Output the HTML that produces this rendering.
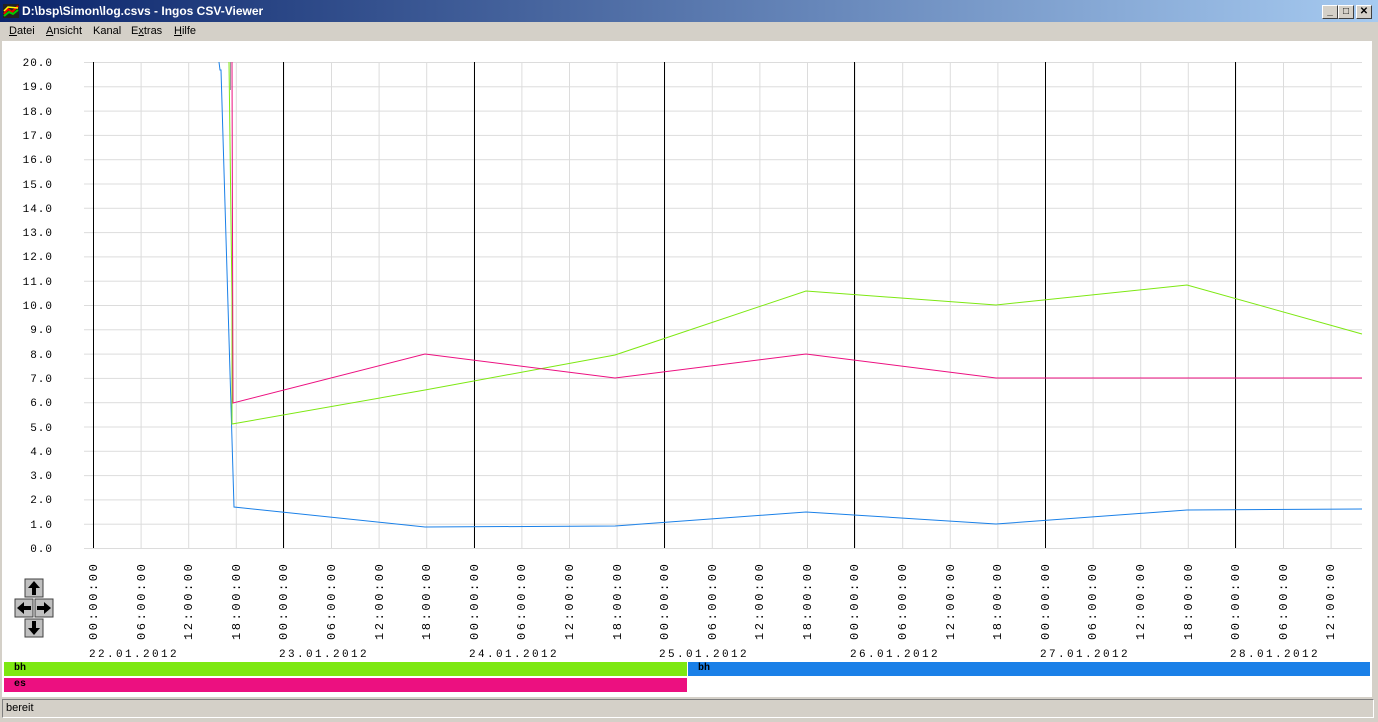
<!DOCTYPE html>
<html><head><meta charset="utf-8"><style>
body{margin:0;width:1378px;height:722px;overflow:hidden;background:#d4d0c8;font-family:Tahoma,"Liberation Sans",sans-serif;font-size:11px;position:relative}
.title{position:absolute;left:0;top:0;width:1378px;height:22px;background:linear-gradient(90deg,#0a246a,#a6caf0);color:#fff;font-weight:bold;font-size:12px;line-height:22px}
.btn{position:absolute;top:5px;width:16px;height:14px;background:#d4d0c8;border:1px solid;border-color:#fff #404040 #404040 #fff;box-sizing:border-box;color:#000;font-size:10px;line-height:12px;text-align:center}
.menu{position:absolute;top:22px;left:0;width:400px;height:19px;line-height:19px;white-space:nowrap;font-size:11px}
.menu span{position:absolute;top:0}
.client{position:absolute;left:2px;top:41px;width:1370px;height:656px;background:#fff}
.bar{position:absolute;height:14px;font-family:"Liberation Mono",monospace;font-size:10px;line-height:13px;padding-left:10px;box-sizing:border-box;font-weight:bold}
.status{position:absolute;left:2px;top:699px;width:1372px;height:19px;border:1px solid;border-color:#808080 #fff #fff #808080;box-sizing:border-box;line-height:17px;padding-left:3px;font-size:11px}
</style></head><body>
<div class="title"><svg width="16" height="14" style="position:absolute;left:3px;top:4px"><rect width="16" height="14" fill="#222"/><path d="M1 10L5 5L9 8L15 2" stroke="#e00" stroke-width="2" fill="none"/><path d="M1 12L6 8L10 10L15 6" stroke="#0c0" stroke-width="2" fill="none"/><path d="M1 7L5 3L15 4" stroke="#ff0" stroke-width="1.5" fill="none"/></svg><span style="position:absolute;left:22px">D:\bsp\Simon\log.csvs - Ingos CSV-Viewer</span>
<div class="btn" style="left:1322px">_</div><div class="btn" style="left:1338px">□</div><div class="btn" style="left:1356px;font-weight:bold">✕</div></div>
<div class="menu"><span style="left:9px"><u>D</u>atei</span><span style="left:46px"><u>A</u>nsicht</span><span style="left:93px">Kanal</span><span style="left:131px">E<u>x</u>tras</span><span style="left:174px"><u>H</u>ilfe</span></div>
<div class="client"></div>
<svg width="1378" height="722" style="position:absolute;left:0;top:0" font-family="Liberation Mono,monospace" font-size="11">
<defs><pattern id="g" x="93" y="62" width="47.6" height="24.3" patternUnits="userSpaceOnUse"><path d="M0 0.5H47.6M0.5 0V24.3" stroke="#dcdcdc" stroke-width="1"/></pattern></defs>
<rect x="93" y="62" width="1269" height="486" fill="url(#g)"/>
<g stroke="#dcdcdc"><path d="M84 62.5H93M84 86.8H93M84 111.1H93M84 135.4H93M84 159.7H93M84 184H93M84 208.3H93M84 232.6H93M84 256.9H93M84 281.2H93M84 305.5H93M84 329.8H93M84 354.1H93M84 378.4H93M84 402.7H93M84 427H93M84 451.3H93M84 475.6H93M84 499.9H93M84 524.2H93M84 548.5H1362"/></g>
<g stroke="#000"><path d="M93.5 62V548M283.5 62V548M474.5 62V548M664.5 62V548M854.5 62V548M1045.5 62V548M1235.5 62V548"/></g>
<g fill="#000" text-anchor="end" letter-spacing="1">
<text x="53" y="66">20.0</text><text x="53" y="90">19.0</text><text x="53" y="115">18.0</text><text x="53" y="139">17.0</text><text x="53" y="163">16.0</text><text x="53" y="188">15.0</text><text x="53" y="212">14.0</text><text x="53" y="236">13.0</text><text x="53" y="260">12.0</text><text x="53" y="285">11.0</text><text x="53" y="309">10.0</text><text x="53" y="333">9.0</text><text x="53" y="358">8.0</text><text x="53" y="382">7.0</text><text x="53" y="406">6.0</text><text x="53" y="431">5.0</text><text x="53" y="455">4.0</text><text x="53" y="479">3.0</text><text x="53" y="503">2.0</text><text x="53" y="528">1.0</text><text x="53" y="552">0.0</text></g>
<g fill="none" stroke-width="1">
<polyline stroke="#1a80e8" points="219,62 220,70 221,70 234,507 425,527 615,526 806,512 996,524 1187,510 1362,509"/>
<polyline stroke="#7de812" points="229,62 232,300 232,424 425,390 615,355 806,291 996,305 1187,285 1362,334"/>
<polyline stroke="#ec1080" points="232,62 233,403 425,354 615,378 806,354 996,378 1362,378"/>
<path d="M230.5 62V90" stroke="#999"/>
</g>
<g fill="#000" letter-spacing="2.6" font-size="12">
<text transform="translate(97,640) rotate(-90)">00:00:00</text><text transform="translate(145,640) rotate(-90)">06:00:00</text><text transform="translate(192,640) rotate(-90)">12:00:00</text><text transform="translate(240,640) rotate(-90)">18:00:00</text>
<text transform="translate(287,640) rotate(-90)">00:00:00</text><text transform="translate(335,640) rotate(-90)">06:00:00</text><text transform="translate(383,640) rotate(-90)">12:00:00</text><text transform="translate(430,640) rotate(-90)">18:00:00</text>
<text transform="translate(478,640) rotate(-90)">00:00:00</text><text transform="translate(525,640) rotate(-90)">06:00:00</text><text transform="translate(573,640) rotate(-90)">12:00:00</text><text transform="translate(621,640) rotate(-90)">18:00:00</text>
<text transform="translate(668,640) rotate(-90)">00:00:00</text><text transform="translate(716,640) rotate(-90)">06:00:00</text><text transform="translate(763,640) rotate(-90)">12:00:00</text><text transform="translate(811,640) rotate(-90)">18:00:00</text>
<text transform="translate(858,640) rotate(-90)">00:00:00</text><text transform="translate(906,640) rotate(-90)">06:00:00</text><text transform="translate(954,640) rotate(-90)">12:00:00</text><text transform="translate(1001,640) rotate(-90)">18:00:00</text>
<text transform="translate(1049,640) rotate(-90)">00:00:00</text><text transform="translate(1096,640) rotate(-90)">06:00:00</text><text transform="translate(1144,640) rotate(-90)">12:00:00</text><text transform="translate(1192,640) rotate(-90)">18:00:00</text>
<text transform="translate(1239,640) rotate(-90)">00:00:00</text><text transform="translate(1287,640) rotate(-90)">06:00:00</text><text transform="translate(1334,640) rotate(-90)">12:00:00</text>
</g>
<g fill="#000" letter-spacing="2.4"><text x="89" y="657">22.01.2012</text><text x="279" y="657">23.01.2012</text><text x="469" y="657">24.01.2012</text><text x="659" y="657">25.01.2012</text><text x="850" y="657">26.01.2012</text><text x="1040" y="657">27.01.2012</text><text x="1230" y="657">28.01.2012</text></g>
<g>
<rect x="25" y="579" width="18" height="18" fill="#c0c0c0" stroke="#404040"/><rect x="25" y="619" width="18" height="18" fill="#c0c0c0" stroke="#404040"/><rect x="15" y="599" width="18" height="18" fill="#c0c0c0" stroke="#404040"/><rect x="35" y="599" width="18" height="18" fill="#c0c0c0" stroke="#404040"/>
<path d="M34 581L28 588H32V595H36V588H40Z M34 635L28 628H32V621H36V628H40Z M17 608L24 602V606H31V610H24V614Z M51 608L44 602V606H37V610H44V614Z" fill="#000"/>
</g>
</svg>
<div class="bar" style="left:4px;top:662px;width:683px;background:#7de812">bh</div>
<div class="bar" style="left:688px;top:662px;width:682px;background:#1a80e8">bh</div>
<div class="bar" style="left:4px;top:678px;width:683px;background:#ec1080">es</div>
<div class="status">bereit</div>
</body></html>
